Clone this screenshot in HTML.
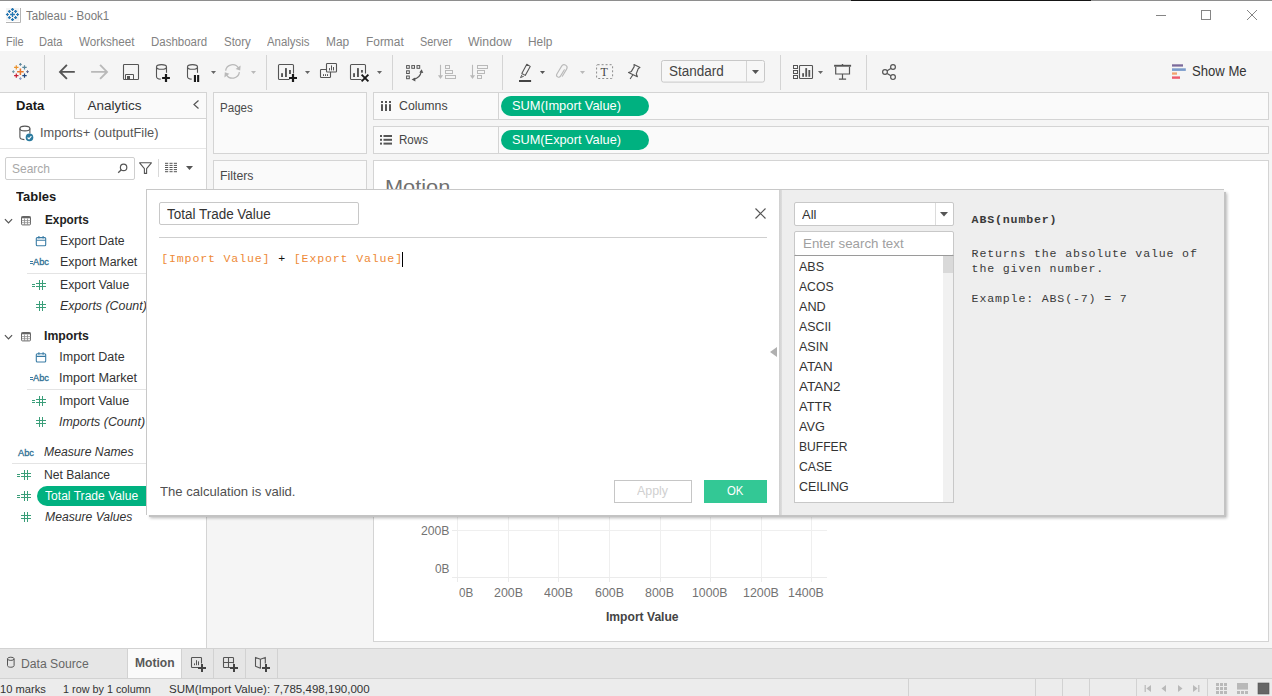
<!DOCTYPE html>
<html lang="en"><head><meta charset="utf-8"><title>Tableau - Book1</title>
<style>
*{box-sizing:border-box;margin:0;padding:0}
html,body{width:1272px;height:696px;overflow:hidden;background:#fff}
body{font-family:"Liberation Sans",sans-serif;font-size:12px;color:#333}
#app{position:relative;width:1272px;height:696px;overflow:hidden;background:#fff}
.a{position:absolute}
.t{position:absolute;white-space:pre;transform-origin:0 50%}
svg{overflow:visible}
</style></head>
<body>
<div id="app">
<div class="a" style="left:0px;top:0px;width:1272px;height:1px;background:#8e8e8e;"></div>
<div class="a" style="left:851px;top:0px;width:240px;height:1px;background:#151515;"></div>
<svg class="a" style="left:0px;top:0px;" width="24" height="24" viewBox="0 0 24 24" fill="none"><rect x="6" y="8" width="13.2" height="12.8" fill="#f3f3f3"/><path d="M20.5 8V22.5H6" stroke="#b4b4b4" stroke-width="1"/><path d="M10.1 14.5H14.9M12.5 12.1V16.9" stroke="#2677b3" stroke-width="1.3"/><path d="M11.0 9.4H14.0M12.5 7.9V10.9" stroke="#2677b3" stroke-width="1.15"/><path d="M11.0 19.6H14.0M12.5 18.1V21.1" stroke="#2677b3" stroke-width="1.15"/><path d="M5.9 14.5H8.9M7.4 13.0V16.0" stroke="#2677b3" stroke-width="1.15"/><path d="M16.1 14.5H19.1M17.6 13.0V16.0" stroke="#2677b3" stroke-width="1.15"/><path d="M7.9 11.4H10.9M9.4 9.9V12.9" stroke="#2677b3" stroke-width="1.15"/><path d="M14.1 11.4H17.1M15.6 9.9V12.9" stroke="#2677b3" stroke-width="1.15"/><path d="M7.9 17.6H10.9M9.4 16.1V19.1" stroke="#2677b3" stroke-width="1.15"/><path d="M14.1 17.6H17.1M15.6 16.1V19.1" stroke="#2677b3" stroke-width="1.15"/></svg>
<div class="t" style="left:26px;top:8px;font-size:12px;line-height:17px;color:#7a7a7a;transform:scaleX(0.9593);">Tableau - Book1</div>
<svg class="a" style="left:1156px;top:10px;" width="10" height="10" viewBox="0 0 10 10" fill="none"><path d="M0 5.5H10" stroke="#858585" stroke-width="1"/></svg>
<svg class="a" style="left:1201px;top:10px;" width="10" height="10" viewBox="0 0 10 10" fill="none"><rect x="0.5" y="0.5" width="9" height="9" stroke="#858585" stroke-width="1"/></svg>
<svg class="a" style="left:1247px;top:10px;" width="10" height="10" viewBox="0 0 10 10" fill="none"><path d="M0 0L10 10M10 0L0 10" stroke="#858585" stroke-width="1"/></svg>
<div class="t" style="left:5.5px;top:34px;font-size:12px;line-height:17px;color:#828282;transform:scaleX(0.9099);">File</div>
<div class="t" style="left:39.2px;top:34px;font-size:12px;line-height:17px;color:#828282;transform:scaleX(0.9227);">Data</div>
<div class="t" style="left:79.2px;top:34px;font-size:12px;line-height:17px;color:#828282;transform:scaleX(0.9730);">Worksheet</div>
<div class="t" style="left:151.4px;top:34px;font-size:12px;line-height:17px;color:#828282;transform:scaleX(0.9554);">Dashboard</div>
<div class="t" style="left:224px;top:34px;font-size:12px;line-height:17px;color:#828282;transform:scaleX(0.9566);">Story</div>
<div class="t" style="left:267.2px;top:34px;font-size:12px;line-height:17px;color:#828282;transform:scaleX(0.9510);">Analysis</div>
<div class="t" style="left:326.3px;top:34px;font-size:12px;line-height:17px;color:#828282;transform:scaleX(0.9938);">Map</div>
<div class="t" style="left:366.3px;top:34px;font-size:12px;line-height:17px;color:#828282;transform:scaleX(0.9917);">Format</div>
<div class="t" style="left:420px;top:34px;font-size:12px;line-height:17px;color:#828282;transform:scaleX(0.9054);">Server</div>
<div class="t" style="left:468.3px;top:34px;font-size:12px;line-height:17px;color:#828282;transform:scaleX(1.0237);">Window</div>
<div class="t" style="left:528px;top:34px;font-size:12px;line-height:17px;color:#828282;transform:scaleX(0.9924);">Help</div>
<div class="a" style="left:0px;top:51px;width:1272px;height:41px;background:#f5f5f5;"></div>
<div class="a" style="left:44px;top:55px;width:1px;height:35px;background:#d4d4d4;"></div>
<div class="a" style="left:266px;top:55px;width:1px;height:35px;background:#d4d4d4;"></div>
<div class="a" style="left:392px;top:55px;width:1px;height:35px;background:#d4d4d4;"></div>
<div class="a" style="left:502px;top:55px;width:1px;height:35px;background:#d4d4d4;"></div>
<div class="a" style="left:780px;top:55px;width:1px;height:35px;background:#d4d4d4;"></div>
<div class="a" style="left:866px;top:55px;width:1px;height:35px;background:#d4d4d4;"></div>
<svg class="a" style="left:0px;top:0px;" width="1272" height="96" viewBox="0 0 1272 96" fill="none"><path d="M17.099999999999998 71.7H23.7M20.4 68.4V75.0" stroke="#e8762d" stroke-width="1.5"/><path d="M14.100000000000001 67.4H18.5M16.3 65.2V69.60000000000001" stroke="#eb9129" stroke-width="1.2"/><path d="M22.3 67.4H26.7M24.5 65.2V69.60000000000001" stroke="#59879b" stroke-width="1.2"/><path d="M14.100000000000001 75.6H18.5M16.3 73.39999999999999V77.8" stroke="#c72035" stroke-width="1.2"/><path d="M22.3 75.6H26.7M24.5 73.39999999999999V77.8" stroke="#1f457e" stroke-width="1.2"/><path d="M19.0 64.4H21.799999999999997M20.4 63.00000000000001V65.80000000000001" stroke="#5b879b" stroke-width="1"/><path d="M19.0 78.6H21.799999999999997M20.4 77.19999999999999V80.0" stroke="#8f9bc7" stroke-width="1"/><path d="M12.0 71.7H14.8M13.4 70.3V73.10000000000001" stroke="#7099a6" stroke-width="1"/><path d="M26.1 71.7H28.9M27.5 70.3V73.10000000000001" stroke="#5b6591" stroke-width="1"/><path d="M74.8 71.9H60.2M66.9 64.9L60 71.9L66.9 78.9" stroke="#555" stroke-width="1.9" fill="none" /><path d="M91.1 71.9H105.8M100.1 64.9L107 71.9L100.1 78.9" stroke="#b9b9b9" stroke-width="1.9" fill="none" /><rect x="123.5" y="64.5" width="15" height="15" rx="0.8" stroke="#555" stroke-width="1.1"/><path d="M125.5 79.4V74.5H133.5V79.4" stroke="#555" stroke-width="1" fill="none" /><rect x="127" y="76" width="3" height="3.2" fill="#555"/><ellipse cx="161.5" cy="66.9" rx="5" ry="2.3" stroke="#555" stroke-width="1.1"/><path d="M156.5 66.9V76.4C156.5 78 158.5 79 160.7 79.1" stroke="#555" stroke-width="1.1" fill="none" /><path d="M166.5 66.9V72.8" stroke="#555" stroke-width="1.1" fill="none" /><path d="M162.1 78H169.9M166 74.1V81.9" stroke="#1a1a1a" stroke-width="2.2" fill="none" /><ellipse cx="192.5" cy="66.9" rx="5" ry="2.3" stroke="#555" stroke-width="1.1"/><path d="M187.5 66.9V76.4C187.5 78 189.5 79 191.7 79.1" stroke="#555" stroke-width="1.1" fill="none" /><path d="M197.5 66.9V72.8" stroke="#555" stroke-width="1.1" fill="none" /><rect x="193.9" y="75" width="2.1" height="7" fill="#1a1a1a"/><rect x="197.1" y="75" width="2.1" height="7" fill="#1a1a1a"/><path d="M211 71H216L213.5 74Z" fill="#666"/><path d="M225.6 70.6A7 7 0 0 1 238.6 68.2" stroke="#b9b9b9" stroke-width="1.3" fill="none" /><path d="M239.4 72.2A7 7 0 0 1 226.4 74.6" stroke="#b9b9b9" stroke-width="1.3" fill="none" /><path d="M240.6 65.4L240.2 70.6L235.6 69Z" fill="#b9b9b9"/><path d="M224.4 77.4L224.8 72.2L229.4 73.8Z" fill="#b9b9b9"/><path d="M251 71H256L253.5 74Z" fill="#b9b9b9"/><path d="M289.5 79.5H279.6Q278.5 79.5 278.5 78.4V65.6Q278.5 64.5 279.6 64.5H292.4Q293.5 64.5 293.5 65.6V73.5" stroke="#555" stroke-width="1.1"/><rect x="281.1" y="73.2" width="1.9" height="3.8" fill="#555"/><rect x="285.0" y="68.1" width="1.9" height="8.9" fill="#555"/><rect x="289.0" y="70" width="1.9" height="4" fill="#555"/><path d="M289 78H297M293 74V82" stroke="#1a1a1a" stroke-width="2.2" fill="none" /><path d="M305 71H310L307.5 74Z" fill="#666"/><rect x="326.5" y="63.5" width="10" height="8.5" rx="0.8" stroke="#555" stroke-width="1.1"/><path d="M329.5 70.4V68.1M331.5 70.4V65.4M333.5 70.4V67" stroke="#555" stroke-width="1" fill="none" /><path d="M326.5 69.5H321.3Q320.5 69.5 320.5 70.3V76.7Q320.5 77.5 321.3 77.5H329.7Q330.5 77.5 330.5 76.7V72" stroke="#555" stroke-width="1.1" fill="none" /><path d="M323.5 76V74.2M325.5 76V74.2M327.5 76V74.2" stroke="#555" stroke-width="1" fill="none" /><path d="M361.5 79.5H351.6Q350.5 79.5 350.5 78.4V65.6Q350.5 64.5 351.6 64.5H364.4Q365.5 64.5 365.5 65.6V73.5" stroke="#555" stroke-width="1.1"/><rect x="353.1" y="73.2" width="1.9" height="3.8" fill="#555"/><rect x="357.0" y="68.1" width="1.9" height="8.9" fill="#555"/><rect x="361.0" y="70" width="1.9" height="2.6" fill="#555"/><path d="M361.6 74.6L368.4 81.4M368.4 74.6L361.6 81.4" stroke="#1a1a1a" stroke-width="1.9" fill="none" /><path d="M377 71H382L379.5 74Z" fill="#666"/><rect x="406.6" y="65.6" width="2.7" height="2.7" stroke="#555" stroke-width="1"/><rect x="411.8" y="65.6" width="2.7" height="2.7" stroke="#555" stroke-width="1"/><rect x="417" y="65.6" width="2.7" height="2.7" stroke="#555" stroke-width="1"/><rect x="406.6" y="70.8" width="2.7" height="2.7" stroke="#555" stroke-width="1"/><rect x="406.6" y="76" width="2.7" height="2.7" stroke="#555" stroke-width="1"/><path d="M413.6 79.4C418 78.4 420.6 75.4 421.3 71.4" stroke="#555" stroke-width="1.2" fill="none" /><path d="M411.6 79.6L415.2 77.4L415.4 81.4Z" fill="#555"/><path d="M421.7 69.2L423.3 73L419.3 72.6Z" fill="#555"/><path d="M440.5 64.8V76" stroke="#b9b9b9" stroke-width="1.1" fill="none" /><path d="M437.9 75.3H443.1L440.5 79Z" fill="#b9b9b9"/><rect x="445.5" y="65.5" width="4" height="3" stroke="#b9b9b9" stroke-width="1"/><rect x="445.5" y="70.5" width="7" height="3" stroke="#b9b9b9" stroke-width="1"/><rect x="445.5" y="75.5" width="10" height="3" stroke="#b9b9b9" stroke-width="1"/><path d="M472.5 64.8V76" stroke="#b9b9b9" stroke-width="1.1" fill="none" /><path d="M469.9 75.3H475.1L472.5 79Z" fill="#b9b9b9"/><rect x="477.5" y="65.5" width="10" height="3" stroke="#b9b9b9" stroke-width="1"/><rect x="477.5" y="70.5" width="7" height="3" stroke="#b9b9b9" stroke-width="1"/><rect x="477.5" y="75.5" width="4" height="3" stroke="#b9b9b9" stroke-width="1"/><path d="M526.8 64.3L530.2 66.4L525.2 75.4L521.8 73.4Z" stroke="#555" stroke-width="1.1" fill="none" stroke-linejoin="round"/><path d="M522 74.8L520.5 77.6L523.4 76.4" stroke="#555" stroke-width="1" fill="none" stroke-linejoin="round" stroke-linecap="round"/><rect x="519" y="80" width="12.1" height="2" fill="#444"/><path d="M540 71H545L542.5 74Z" fill="#555"/><g transform="translate(561.6,71.8) rotate(31)"><path d="M1.3 -3.2V4.3A2.1 2.1 0 0 1 -2.9 4.3V-4.9A2.9 2.9 0 0 1 2.9 -4.9V3.4" stroke="#b9b9b9" stroke-width="1.1" stroke-linecap="round" fill="none"/></g><path d="M580 71H585L582.5 74Z" fill="#b9b9b9"/><rect x="596.6" y="64.7" width="16" height="13.8" rx="1" stroke="#8c8c8c" stroke-width="1" stroke-dasharray="2 2"/><path d="M634 64.5L640 67.4L638.2 68.7L636.3 73.8L637.4 76.8L628.5 72.4L631.4 71.4L634.2 66.6ZM632.9 74.7L630.1 79" stroke="#555" stroke-width="1.1" fill="none" stroke-linejoin="round"/><rect x="661.5" y="60.5" width="103" height="21.6" rx="2" fill="#f7f7f7" stroke="#c8c8c8" stroke-width="1"/><path d="M746.5 61V81.6" stroke="#d4d4d4" stroke-width="1" fill="none" /><path d="M752 70H759L755.5 74Z" fill="#555"/><rect x="793.5" y="65.5" width="4" height="3" stroke="#555" stroke-width="1"/><rect x="793.5" y="70.5" width="4" height="3" stroke="#555" stroke-width="1"/><rect x="793.5" y="75.5" width="4" height="3" stroke="#555" stroke-width="1"/><rect x="799.5" y="65.5" width="13" height="13" rx="0.8" stroke="#555" stroke-width="1.1"/><rect x="802.2" y="73.2" width="1.8" height="3.6" fill="#555"/><rect x="805.3" y="68.1" width="1.8" height="8.7" fill="#555"/><rect x="808.4" y="70" width="1.8" height="6.8" fill="#555"/><path d="M818 71H823L820.5 74Z" fill="#666"/><rect x="834.1" y="64.8" width="17" height="1.9" fill="#555"/><rect x="841.8" y="64" width="1.4" height="1" fill="#555"/><path d="M835.7 66.7V74H849.5V66.7M842.5 74V79M838.9 79.2H846.1" stroke="#555" stroke-width="1.2" fill="none" /><path d="M887.2 70.7L890.8 68.4M887.2 73.4L890.8 75.8" stroke="#555" stroke-width="1.2" fill="none" /><circle cx="885" cy="72" r="2.4" stroke="#555" stroke-width="1.2"/><circle cx="893" cy="67" r="2.4" stroke="#555" stroke-width="1.2"/><circle cx="893" cy="77.1" r="2.4" stroke="#555" stroke-width="1.2"/><rect x="1172" y="64.3" width="11" height="2.3" fill="#7b6a9b"/><rect x="1172" y="68.3" width="13.8" height="2.6" fill="#7b9ccb"/><rect x="1172" y="72.4" width="5" height="2.3" fill="#f2a36e"/><rect x="1172" y="76.4" width="8" height="2.4" fill="#ee5b6e"/></svg>
<div class="t" style="left:600.6px;top:64px;font-size:12px;line-height:17px;color:#444;font-family:'Liberation Serif',serif;">T</div>
<div class="t" style="left:668.7px;top:61px;font-size:14px;line-height:20px;color:#444;transform:scaleX(0.9643);">Standard</div>
<div class="t" style="left:1191.6px;top:61px;font-size:14px;line-height:20px;color:#333;transform:scaleX(0.9356);">Show Me</div>
<div class="a" style="left:0px;top:92px;width:1272px;height:556px;background:#f5f5f5;"></div>
<div class="a" style="left:0px;top:92px;width:207px;height:556px;background:#fff;border-right:1px solid #d4d4d4;"></div>
<div class="a" style="left:74px;top:92px;width:133px;height:27px;background:#fafafa;border:1px solid #d4d4d4;border-top:1px solid #d4d4d4;"></div>
<div class="a" style="left:0px;top:92px;width:74px;height:1px;background:#d4d4d4;"></div>
<div class="t" style="left:15.6px;top:96px;font-size:13.5px;line-height:19px;color:#1a1a1a;font-weight:bold;transform:scaleX(0.9670);">Data</div>
<div class="t" style="left:87.4px;top:96px;font-size:13.5px;line-height:19px;color:#333;">Analytics</div>
<svg class="a" style="left:193px;top:100px;" width="6" height="9" viewBox="0 0 6 9" fill="none"><path d="M5.5 0.5L1 4.5L5.5 8.5" stroke="#555" stroke-width="1.2"/></svg>
<div class="t" style="left:39.6px;top:124px;font-size:12.5px;line-height:18px;color:#555;transform:scaleX(1.0236);">Imports+ (outputFile)</div>
<div class="a" style="left:0px;top:148px;width:206px;height:1px;background:#e6e6e6;"></div>
<div class="a" style="left:5px;top:157px;width:130px;height:23px;background:#fff;border:1px solid #cfcfcf;border-radius:2px;"></div>
<div class="t" style="left:12.4px;top:160px;font-size:13px;line-height:18px;color:#a8a8a8;transform:scaleX(0.9223);">Search</div>
<div class="a" style="left:158px;top:159px;width:1px;height:18px;background:#d9d9d9;"></div>
<div class="t" style="left:15.6px;top:187px;font-size:13.5px;line-height:19px;color:#1a1a1a;font-weight:bold;transform:scaleX(0.9625);">Tables</div>
<div class="t" style="left:44.5px;top:211px;font-size:13px;line-height:18px;color:#222;font-weight:bold;transform:scaleX(0.9048);">Exports</div>
<div class="t" style="left:59.5px;top:232px;font-size:12.5px;line-height:18px;color:#333;transform:scaleX(0.9786);">Export Date</div>
<div class="t" style="left:33.4px;top:255px;font-size:9.5px;line-height:13px;color:#2e6f93;transform:scaleX(0.9710);-webkit-text-stroke:0.3px #2e6f93;">Abc</div>
<div class="t" style="left:59.5px;top:253px;font-size:12.5px;line-height:18px;color:#333;transform:scaleX(0.9934);">Export Market</div>
<div class="a" style="left:27px;top:273px;width:180px;height:1px;background:#e4e4e4;"></div>
<div class="t" style="left:59.5px;top:276px;font-size:12.5px;line-height:18px;color:#333;transform:scaleX(0.9794);">Export Value</div>
<div class="t" style="left:59.6px;top:297px;font-size:12.5px;line-height:18px;color:#333;font-style:italic;transform:scaleX(0.9916);">Exports (Count)</div>
<div class="t" style="left:44.4px;top:327px;font-size:13px;line-height:18px;color:#222;font-weight:bold;transform:scaleX(0.9419);">Imports</div>
<div class="t" style="left:59.3px;top:348px;font-size:12.5px;line-height:18px;color:#333;">Import Date</div>
<div class="t" style="left:33.4px;top:371px;font-size:9.5px;line-height:13px;color:#2e6f93;transform:scaleX(0.9710);-webkit-text-stroke:0.3px #2e6f93;">Abc</div>
<div class="t" style="left:59.3px;top:369px;font-size:12.5px;line-height:18px;color:#333;transform:scaleX(1.0128);">Import Market</div>
<div class="a" style="left:27px;top:389px;width:180px;height:1px;background:#e4e4e4;"></div>
<div class="t" style="left:59.3px;top:392px;font-size:12.5px;line-height:18px;color:#333;">Import Value</div>
<div class="t" style="left:59.4px;top:413px;font-size:12.5px;line-height:18px;color:#333;font-style:italic;transform:scaleX(0.9914);">Imports (Count)</div>
<div class="t" style="left:18.2px;top:446px;font-size:9.5px;line-height:13px;color:#2e6f93;transform:scaleX(0.9710);-webkit-text-stroke:0.3px #2e6f93;">Abc</div>
<div class="t" style="left:44.4px;top:443px;font-size:12.5px;line-height:18px;color:#333;font-style:italic;transform:scaleX(0.9760);">Measure Names</div>
<div class="a" style="left:12px;top:463px;width:195px;height:1px;background:#e4e4e4;"></div>
<div class="t" style="left:44.4px;top:466px;font-size:12.5px;line-height:18px;color:#333;transform:scaleX(0.9705);">Net Balance</div>
<div class="a" style="left:37px;top:486px;width:170px;height:20px;background:#00b180;border-radius:10px;"></div>
<div class="t" style="left:45.3px;top:487px;font-size:12.5px;line-height:18px;color:#fff;transform:scaleX(0.9672);">Total Trade Value</div>
<div class="t" style="left:44.6px;top:508px;font-size:12.5px;line-height:18px;color:#333;font-style:italic;transform:scaleX(0.9725);">Measure Values</div>
<svg class="a" style="left:0px;top:0px;" width="207" height="560" viewBox="0 0 207 560" fill="none"><ellipse cx="24.9" cy="128.5" rx="5" ry="2.4" stroke="#555" stroke-width="1.1"/><path d="M19.9 128.5V137C19.9 138.6 22 139.5 24.4 139.6" stroke="#555" stroke-width="1.1" fill="none" /><path d="M29.9 128.5V133.5" stroke="#555" stroke-width="1.1" fill="none" /><circle cx="29.5" cy="137.4" r="3.8" fill="#2b7a9e"/><path d="M27.6 137.5L29 138.9L31.4 136.2" stroke="#fff" stroke-width="1.1" fill="none" /><circle cx="123.6" cy="167.4" r="3.2" stroke="#555" stroke-width="1.2"/><path d="M121.3 169.8L118.2 172.8" stroke="#555" stroke-width="1.3" fill="none" /><path d="M139.6 162.8H151.4L146.6 168.6V173.4H144.4V168.6Z" stroke="#555" stroke-width="1.1" fill="none" stroke-linejoin="round"/><rect x="165" y="162.8" width="3.2" height="1" fill="#555"/><rect x="169.5" y="162.8" width="3.1" height="1" fill="#555"/><rect x="173.8" y="162.8" width="3.2" height="1" fill="#555"/><rect x="165" y="164.9" width="3.2" height="1" fill="#555"/><rect x="169.5" y="164.9" width="3.1" height="1" fill="#555"/><rect x="173.8" y="164.9" width="3.2" height="1" fill="#555"/><rect x="165" y="167.0" width="3.2" height="1" fill="#555"/><rect x="169.5" y="167.0" width="3.1" height="1" fill="#555"/><rect x="173.8" y="167.0" width="3.2" height="1" fill="#555"/><rect x="165" y="169.1" width="3.2" height="1" fill="#555"/><rect x="169.5" y="169.1" width="3.1" height="1" fill="#555"/><rect x="173.8" y="169.1" width="3.2" height="1" fill="#555"/><rect x="165" y="171.2" width="3.2" height="1" fill="#555"/><rect x="169.5" y="171.2" width="3.1" height="1" fill="#555"/><rect x="173.8" y="171.2" width="3.2" height="1" fill="#555"/><path d="M186 166H193L189.5 170Z" fill="#555"/><path d="M4.9 219.2L8.5 223.0L12.1 219.2" stroke="#555" stroke-width="1.2" fill="none" /><rect x="21.5" y="216.5" width="9" height="8.4" rx="1" stroke="#666" stroke-width="1"/><rect x="21.5" y="216.5" width="9" height="1.8" fill="#666"/><path d="M24.5 218.5V224.8M27.5 218.5V224.8M21.5 220.6H30.5M21.5 222.7H30.5" stroke="#8a8a8a" stroke-width="0.8" fill="none" /><path d="M4.9 335.2L8.5 339.0L12.1 335.2" stroke="#555" stroke-width="1.2" fill="none" /><rect x="21.5" y="332.5" width="9" height="8.4" rx="1" stroke="#666" stroke-width="1"/><rect x="21.5" y="332.5" width="9" height="1.8" fill="#666"/><path d="M24.5 334.5V340.8M27.5 334.5V340.8M21.5 336.6H30.5M21.5 338.7H30.5" stroke="#8a8a8a" stroke-width="0.8" fill="none" /><rect x="36.3" y="237.6" width="9.4" height="8.2" rx="1" stroke="#3a7ca5" stroke-width="1.1"/><path d="M36.3 240.2H45.7M38.9 236.0V238.6M43.1 236.0V238.6" stroke="#3a7ca5" stroke-width="1.1" fill="none" /><rect x="36.3" y="353.79999999999995" width="9.4" height="8.2" rx="1" stroke="#3a7ca5" stroke-width="1.1"/><path d="M36.3 356.4H45.7M38.9 352.2V354.79999999999995M43.1 352.2V354.79999999999995" stroke="#3a7ca5" stroke-width="1.1" fill="none" /><path d="M39.5 280V290M42.5 280V290M36 283.5H46M36 286.5H46" stroke="#3a9e79" stroke-width="1" shape-rendering="crispEdges"/><path d="M32 284.5H35M32 286.5H35" stroke="#3a9e79" stroke-width="1" shape-rendering="crispEdges"/><path d="M39.5 301V311M42.5 301V311M36 304.5H46M36 307.5H46" stroke="#3a9e79" stroke-width="1" shape-rendering="crispEdges"/><path d="M39.5 396V406M42.5 396V406M36 399.5H46M36 402.5H46" stroke="#3a9e79" stroke-width="1" shape-rendering="crispEdges"/><path d="M32 400.5H35M32 402.5H35" stroke="#3a9e79" stroke-width="1" shape-rendering="crispEdges"/><path d="M39.5 417V427M42.5 417V427M36 420.5H46M36 423.5H46" stroke="#3a9e79" stroke-width="1" shape-rendering="crispEdges"/><path d="M24.5 470V480M27.5 470V480M21 473.5H31M21 476.5H31" stroke="#3a9e79" stroke-width="1" shape-rendering="crispEdges"/><path d="M17 474.5H20M17 476.5H20" stroke="#3a9e79" stroke-width="1" shape-rendering="crispEdges"/><path d="M24.5 491V501M27.5 491V501M21 494.5H31M21 497.5H31" stroke="#3a9e79" stroke-width="1" shape-rendering="crispEdges"/><path d="M17 495.5H20M17 497.5H20" stroke="#3a9e79" stroke-width="1" shape-rendering="crispEdges"/><path d="M24.5 512V522M27.5 512V522M21 515.5H31M21 518.5H31" stroke="#3a9e79" stroke-width="1" shape-rendering="crispEdges"/><path d="M30 261.5H33M30 263.5H33M30 377.5H33M30 379.5H33" stroke="#3a7ca5" stroke-width="1" shape-rendering="crispEdges"/></svg>
<div class="a" style="left:213px;top:92px;width:154px;height:62px;background:#fafafa;border:1px solid #d4d4d4;"></div>
<div class="t" style="left:220.3px;top:100px;font-size:12px;line-height:17px;color:#4a4a4a;transform:scaleX(0.9638);">Pages</div>
<div class="a" style="left:213px;top:160px;width:154px;height:70px;background:#fafafa;border:1px solid #d4d4d4;"></div>
<div class="t" style="left:220.3px;top:168px;font-size:12px;line-height:17px;color:#4a4a4a;transform:scaleX(1.0253);">Filters</div>
<div class="a" style="left:373px;top:92px;width:896px;height:28px;background:#fafafa;border:1px solid #d4d4d4;"></div>
<div class="a" style="left:498px;top:93px;width:1px;height:26px;background:#d4d4d4;"></div>
<div class="t" style="left:399.2px;top:98px;font-size:12px;line-height:17px;color:#444;transform:scaleX(1.0262);">Columns</div>
<div class="a" style="left:501px;top:96px;width:148px;height:20px;background:#00b180;border-radius:10px;"></div>
<div class="t" style="left:512.2px;top:97px;font-size:13px;line-height:18px;color:#fff;transform:scaleX(0.9882);">SUM(Import Value)</div>
<svg class="a" style="left:381px;top:101px;" width="10" height="10" viewBox="0 0 10 10" fill="none"><rect x="0" y="0" width="2" height="2" fill="#555"/><rect x="0" y="3.2" width="2" height="6.8" fill="#555"/><rect x="4" y="0" width="2" height="2" fill="#555"/><rect x="4" y="3.2" width="2" height="6.8" fill="#555"/><rect x="8" y="0" width="2" height="2" fill="#555"/><rect x="8" y="3.2" width="2" height="6.8" fill="#555"/></svg>
<div class="a" style="left:373px;top:126px;width:896px;height:28px;background:#fafafa;border:1px solid #d4d4d4;"></div>
<div class="a" style="left:498px;top:127px;width:1px;height:26px;background:#d4d4d4;"></div>
<div class="t" style="left:399.2px;top:132px;font-size:12px;line-height:17px;color:#444;transform:scaleX(0.9662);">Rows</div>
<div class="a" style="left:501px;top:130px;width:148px;height:20px;background:#00b180;border-radius:10px;"></div>
<div class="t" style="left:512.2px;top:131px;font-size:13px;line-height:18px;color:#fff;transform:scaleX(0.9818);">SUM(Export Value)</div>
<svg class="a" style="left:380px;top:134.5px;" width="12" height="10" viewBox="0 0 12 10" fill="none"><rect x="0" y="0" width="2" height="2" fill="#555"/><rect x="3.5" y="0" width="8.5" height="2" fill="#555"/><rect x="0" y="3.8" width="2" height="2" fill="#555"/><rect x="3.5" y="3.8" width="8.5" height="2" fill="#555"/><rect x="0" y="7.6" width="2" height="2" fill="#555"/><rect x="3.5" y="7.6" width="8.5" height="2" fill="#555"/></svg>
<div class="a" style="left:373px;top:160px;width:896px;height:482px;background:#fff;border:1px solid #d4d4d4;"></div>
<div class="t" style="left:385.4px;top:173px;font-size:20px;line-height:28px;color:#707070;transform:scaleX(1.0878);">Motion</div>
<div class="a" style="left:457px;top:515px;width:1px;height:62px;background:#efefef;"></div>
<div class="a" style="left:508px;top:515px;width:1px;height:62px;background:#efefef;"></div>
<div class="a" style="left:558px;top:515px;width:1px;height:62px;background:#efefef;"></div>
<div class="a" style="left:609px;top:515px;width:1px;height:62px;background:#efefef;"></div>
<div class="a" style="left:660px;top:515px;width:1px;height:62px;background:#efefef;"></div>
<div class="a" style="left:710px;top:515px;width:1px;height:62px;background:#efefef;"></div>
<div class="a" style="left:761px;top:515px;width:1px;height:62px;background:#efefef;"></div>
<div class="a" style="left:811px;top:515px;width:1px;height:62px;background:#efefef;"></div>
<div class="a" style="left:457px;top:530px;width:370px;height:1px;background:#efefef;"></div>
<div class="a" style="left:452px;top:577px;width:375px;height:1px;background:#ebebeb;"></div>
<div class="a" style="left:452px;top:530px;width:5px;height:1px;background:#ebebeb;"></div>
<div class="a" style="left:457px;top:578px;width:1px;height:4px;background:#ebebeb;"></div>
<div class="a" style="left:508px;top:578px;width:1px;height:4px;background:#ebebeb;"></div>
<div class="a" style="left:558px;top:578px;width:1px;height:4px;background:#ebebeb;"></div>
<div class="a" style="left:609px;top:578px;width:1px;height:4px;background:#ebebeb;"></div>
<div class="a" style="left:660px;top:578px;width:1px;height:4px;background:#ebebeb;"></div>
<div class="a" style="left:710px;top:578px;width:1px;height:4px;background:#ebebeb;"></div>
<div class="a" style="left:761px;top:578px;width:1px;height:4px;background:#ebebeb;"></div>
<div class="a" style="left:811px;top:578px;width:1px;height:4px;background:#ebebeb;"></div>
<div class="t" style="left:420.9px;top:523px;font-size:12px;line-height:17px;color:#737373;transform:scaleX(1.0167);">200B</div>
<div class="t" style="left:434.9px;top:561px;font-size:12px;line-height:17px;color:#737373;transform:scaleX(0.9872);">0B</div>
<div class="t" style="left:458.7px;top:585px;font-size:12px;line-height:17px;color:#737373;transform:scaleX(0.9736);">0B</div>
<div class="t" style="left:493.8px;top:585px;font-size:12px;line-height:17px;color:#737373;transform:scaleX(1.0346);">200B</div>
<div class="t" style="left:543.6px;top:585px;font-size:12px;line-height:17px;color:#737373;transform:scaleX(1.0346);">400B</div>
<div class="t" style="left:594.5px;top:585px;font-size:12px;line-height:17px;color:#737373;transform:scaleX(1.0381);">600B</div>
<div class="t" style="left:645.3px;top:585px;font-size:12px;line-height:17px;color:#737373;transform:scaleX(1.0310);">800B</div>
<div class="t" style="left:691.9px;top:585px;font-size:12px;line-height:17px;color:#737373;transform:scaleX(1.0230);">1000B</div>
<div class="t" style="left:742.8px;top:585px;font-size:12px;line-height:17px;color:#737373;transform:scaleX(1.0345);">1200B</div>
<div class="t" style="left:788.1px;top:585px;font-size:12px;line-height:17px;color:#737373;transform:scaleX(1.0345);">1400B</div>
<div class="t" style="left:605.6px;top:609px;font-size:12px;line-height:17px;color:#444;font-weight:bold;transform:scaleX(1.0079);">Import Value</div>
<div class="a" style="left:0px;top:648px;width:1272px;height:31px;background:#e6e6e6;border-top:1px solid #d2d2d2;"></div>
<div class="a" style="left:127px;top:649px;width:55px;height:30px;background:#fafafa;border-left:1px solid #d2d2d2;border-right:1px solid #d2d2d2;"></div>
<div class="a" style="left:213px;top:649px;width:1px;height:29px;background:#d2d2d2;"></div>
<div class="a" style="left:245px;top:649px;width:1px;height:29px;background:#d2d2d2;"></div>
<div class="a" style="left:277px;top:649px;width:1px;height:29px;background:#d2d2d2;"></div>
<div class="t" style="left:21.2px;top:656px;font-size:12px;line-height:17px;color:#666;transform:scaleX(1.0149);">Data Source</div>
<div class="t" style="left:134.5px;top:655px;font-size:12px;line-height:17px;color:#585858;font-weight:bold;transform:scaleX(1.0069);">Motion</div>
<div class="a" style="left:0px;top:678px;width:1272px;height:18px;background:#ececec;border-top:1px solid #d2d2d2;"></div>
<div class="t" style="left:0.3px;top:681px;font-size:11.5px;line-height:16px;color:#333;transform:scaleX(0.9684);">10 marks</div>
<div class="t" style="left:63.2px;top:681px;font-size:11.5px;line-height:16px;color:#333;transform:scaleX(0.9408);">1 row by 1 column</div>
<div class="t" style="left:169.3px;top:681px;font-size:11.5px;line-height:16px;color:#333;transform:scaleX(1.0041);">SUM(Import Value): 7,785,498,190,000</div>
<div class="a" style="left:908px;top:679px;width:1px;height:17px;background:#d2d2d2;"></div>
<div class="a" style="left:1035px;top:679px;width:1px;height:17px;background:#d2d2d2;"></div>
<div class="a" style="left:1062px;top:679px;width:1px;height:17px;background:#d2d2d2;"></div>
<div class="a" style="left:1089px;top:679px;width:1px;height:17px;background:#d2d2d2;"></div>
<div class="a" style="left:1136px;top:679px;width:1px;height:17px;background:#d2d2d2;"></div>
<div class="a" style="left:1207px;top:679px;width:1px;height:17px;background:#d2d2d2;"></div>
<svg class="a" style="left:0px;top:0px;" width="1272" height="696" viewBox="0 0 1272 696" fill="none"><ellipse cx="10.8" cy="658.8" rx="3.3" ry="1.6" stroke="#555" stroke-width="1"/><path d="M7.5 658.8V665.6C7.5 667.8 14.1 667.8 14.1 665.6V658.8" stroke="#555" stroke-width="1" fill="none" /><path d="M199 667.5H192.3Q191.5 667.5 191.5 666.7V658.3Q191.5 657.5 192.3 657.5H200.7Q201.5 657.5 201.5 658.3V663.6" stroke="#555" stroke-width="1.1" fill="none" /><path d="M194.5 665.2V663.4M196.5 665.2V660.2M198.5 665.2V661.4" stroke="#555" stroke-width="1" fill="none" /><path d="M198 668H206M202 664V672" stroke="#444" stroke-width="2" fill="none" /><path d="M230.8 667.5H224.3Q223.5 667.5 223.5 666.7V658.3Q223.5 657.5 224.3 657.5H232.7Q233.5 657.5 233.5 658.3V663.6M228.5 657.5V667.5M223.5 662.5H233.5" stroke="#555" stroke-width="1.1" fill="none" /><path d="M230 668H238M234 664V672" stroke="#444" stroke-width="2" fill="none" /><path d="M265.3 663.6V657.4L260.4 659.2L255.5 657.4V666.2L260.4 668.2V659.2" stroke="#555" stroke-width="1.1" fill="none" stroke-linejoin="round"/><path d="M262 668H270M266 664V672" stroke="#444" stroke-width="2" fill="none" /><rect x="1144.6" y="685" width="1.2" height="7" fill="#b9b9b9"/><path d="M1151 685V692L1146.4 688.5Z" fill="#b9b9b9"/><path d="M1166 685V692L1161.5 688.5Z" fill="#b9b9b9"/><path d="M1178 685V692L1182.5 688.5Z" fill="#b9b9b9"/><path d="M1193 685V692L1197.6 688.5Z" fill="#b9b9b9"/><rect x="1198.2" y="685" width="1.2" height="7" fill="#b9b9b9"/><rect x="1216" y="683" width="3" height="3" fill="#b9b9b9"/><rect x="1216" y="687" width="3" height="3" fill="#b9b9b9"/><rect x="1216" y="691" width="3" height="3" fill="#b9b9b9"/><rect x="1220" y="683" width="3" height="3" fill="#b9b9b9"/><rect x="1220" y="687" width="3" height="3" fill="#b9b9b9"/><rect x="1220" y="691" width="3" height="3" fill="#b9b9b9"/><rect x="1224" y="683" width="3" height="3" fill="#b9b9b9"/><rect x="1224" y="687" width="3" height="3" fill="#b9b9b9"/><rect x="1224" y="691" width="3" height="3" fill="#b9b9b9"/><rect x="1237" y="683" width="11" height="6.6" fill="#b9b9b9"/><rect x="1237" y="691" width="3" height="3" fill="#b9b9b9"/><rect x="1241" y="691" width="3" height="3" fill="#b9b9b9"/><rect x="1245" y="691" width="3" height="3" fill="#b9b9b9"/><rect x="1258" y="683" width="11" height="11" fill="#666" stroke="#555" stroke-width="0.6"/></svg>
<div class="a" style="left:146px;top:189px;width:1078px;height:326px;background:#c8c8c8;"></div>
<div class="a" style="left:147px;top:190px;width:1077px;height:325px;background:#eeeeee;box-shadow:2px 2px 0 #c3c3c3,3px 3px 3px rgba(0,0,0,.28);"></div>
<div class="a" style="left:147px;top:190px;width:632px;height:325px;background:#fff;"></div>
<div class="a" style="left:779px;top:190px;width:3px;height:325px;background:linear-gradient(90deg,#cfcfcf,#dedede);"></div>
<div class="a" style="left:159px;top:202px;width:200px;height:23px;background:#fff;border:1px solid #c8c8c8;border-radius:2px;"></div>
<div class="t" style="left:166.5px;top:204px;font-size:14px;line-height:20px;color:#333;transform:scaleX(0.9618);">Total Trade Value</div>
<svg class="a" style="left:755px;top:208px;" width="11" height="11" viewBox="0 0 11 11" fill="none"><path d="M0.5 0.5L10.5 10.5M10.5 0.5L0.5 10.5" stroke="#555" stroke-width="1.2"/></svg>
<div class="a" style="left:159px;top:237px;width:608px;height:1px;background:#cfcfcf;"></div>
<div class="t" style="left:161.2px;top:251px;font-size:11.6px;line-height:16px;color:#ee8a38;font-family:'Liberation Mono',monospace;letter-spacing:0.84px;">[Import Value]</div>
<div class="t" style="left:278.2px;top:251px;font-size:11.6px;line-height:16px;color:#111;font-family:'Liberation Mono',monospace;letter-spacing:0.84px;">+</div>
<div class="t" style="left:293.79999999999995px;top:251px;font-size:11.6px;line-height:16px;color:#ee8a38;font-family:'Liberation Mono',monospace;letter-spacing:0.84px;">[Export Value]</div>
<div class="a" style="left:402px;top:252px;width:1px;height:15px;background:#000;"></div>
<div class="t" style="left:159.8px;top:482px;font-size:13.5px;line-height:19px;color:#505050;transform:scaleX(0.9708);">The calculation is valid.</div>
<div class="a" style="left:614px;top:480px;width:78px;height:23px;background:#fff;border:1px solid #c6c6c6;"></div>
<div class="t" style="left:637.4px;top:481px;font-size:13.5px;line-height:19px;color:#d0d0d0;transform:scaleX(0.9177);">Apply</div>
<div class="a" style="left:704px;top:480px;width:63px;height:23px;background:#33c895;"></div>
<div class="t" style="left:727.4px;top:481px;font-size:13.5px;line-height:19px;color:#fff;transform:scaleX(0.8404);">OK</div>
<svg class="a" style="left:770px;top:347px;" width="7" height="10" viewBox="0 0 7 10" fill="none"><path d="M7 0V10L0 5Z" fill="#b0b0b0"/></svg>
<div class="a" style="left:794px;top:202px;width:160px;height:24px;background:#fff;border:1px solid #c8c8c8;border-radius:2px;"></div>
<div class="a" style="left:935px;top:203px;width:1px;height:22px;background:#dcdcdc;"></div>
<div class="t" style="left:802.2px;top:205px;font-size:13.5px;line-height:19px;color:#333;transform:scaleX(0.9590);">All</div>
<svg class="a" style="left:940px;top:211.5px;" width="8" height="4.5" viewBox="0 0 8 4.5" fill="none"><path d="M0 0H8L4 4.5Z" fill="#555"/></svg>
<div class="a" style="left:794px;top:231px;width:160px;height:25px;background:#fff;border:1px solid #c8c8c8;border-radius:2px;"></div>
<div class="t" style="left:802.5px;top:235px;font-size:13px;line-height:18px;color:#a0a0a0;transform:scaleX(1.0236);">Enter search text</div>
<div class="a" style="left:794px;top:255px;width:160px;height:248px;background:#fff;border:1px solid #c8c8c8;border-top:1px solid #9a9a9a;"></div>
<div class="a" style="left:943px;top:256px;width:10px;height:246px;background:#f1f1f1;"></div>
<div class="a" style="left:943px;top:256px;width:10px;height:17px;background:#d9d9d9;"></div>
<div class="a" style="left:795px;top:256px;width:148px;height:246px;overflow:hidden">
<div class="t" style="left:3.6px;top:2px;font-size:13px;line-height:18px;color:#333;transform:scaleX(0.9610);">ABS</div>
<div class="t" style="left:3.6px;top:22px;font-size:13px;line-height:18px;color:#333;transform:scaleX(0.9364);">ACOS</div>
<div class="t" style="left:3.6px;top:42px;font-size:13px;line-height:18px;color:#333;transform:scaleX(0.9726);">AND</div>
<div class="t" style="left:3.6px;top:62px;font-size:13px;line-height:18px;color:#333;transform:scaleX(0.9509);">ASCII</div>
<div class="t" style="left:3.6px;top:82px;font-size:13px;line-height:18px;color:#333;transform:scaleX(0.9656);">ASIN</div>
<div class="t" style="left:3.6px;top:102px;font-size:13px;line-height:18px;color:#333;transform:scaleX(1.0260);">ATAN</div>
<div class="t" style="left:3.6px;top:122px;font-size:13px;line-height:18px;color:#333;transform:scaleX(1.0379);">ATAN2</div>
<div class="t" style="left:3.6px;top:142px;font-size:13px;line-height:18px;color:#333;transform:scaleX(0.9914);">ATTR</div>
<div class="t" style="left:3.6px;top:162px;font-size:13px;line-height:18px;color:#333;transform:scaleX(0.9774);">AVG</div>
<div class="t" style="left:3.6px;top:182px;font-size:13px;line-height:18px;color:#333;transform:scaleX(0.9308);">BUFFER</div>
<div class="t" style="left:3.6px;top:202px;font-size:13px;line-height:18px;color:#333;transform:scaleX(0.9377);">CASE</div>
<div class="t" style="left:3.6px;top:222px;font-size:13px;line-height:18px;color:#333;transform:scaleX(0.9574);">CEILING</div>
<div class="t" style="left:3.6px;top:242px;font-size:13px;line-height:18px;color:#333;transform:scaleX(0.9364);">CHAR</div>
</div>
<div class="t" style="left:971.6px;top:212px;font-size:11.6px;line-height:16px;color:#3a3a3a;font-family:'Liberation Mono',monospace;font-weight:bold;letter-spacing:0.84px;">ABS(number)</div>
<div class="t" style="left:971.6px;top:246px;font-size:11.6px;line-height:16px;color:#3a3a3a;font-family:'Liberation Mono',monospace;letter-spacing:0.84px;">Returns the absolute value of</div>
<div class="t" style="left:971.6px;top:261px;font-size:11.6px;line-height:16px;color:#3a3a3a;font-family:'Liberation Mono',monospace;letter-spacing:0.84px;">the given number.</div>
<div class="t" style="left:971.6px;top:291px;font-size:11.6px;line-height:16px;color:#3a3a3a;font-family:'Liberation Mono',monospace;letter-spacing:0.84px;">Example: ABS(-7) = 7</div>
</div>
</body></html>
